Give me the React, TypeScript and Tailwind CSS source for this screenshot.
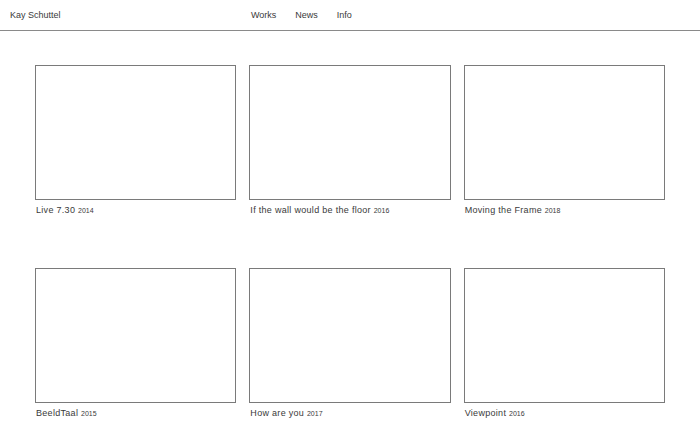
const works = [
  { title: "Live 7.30", year: "2014" },
  { title: "If the wall would be the floor", year: "2016" },
  { title: "Moving the Frame", year: "2018" },
  { title: "BeeldTaal", year: "2015" },
  { title: "How are you", year: "2017" },
  { title: "Viewpoint", year: "2016" },
];

export default function App() {
  return (
    <main className="min-h-screen bg-white text-[#3a3a3a] font-['Liberation_Sans',Arial,sans-serif]">
      <header className="flex h-[31px] items-center border-b border-[#8a8a8a] text-[9px]">
        <div className="w-[250px] pl-[10px] pt-[1px]">Kay Schuttel</div>
        <nav className="flex gap-[19px] pl-[1px] pt-[1px]">
          <a>Works</a>
          <a>News</a>
          <a>Info</a>
        </nav>
      </header>

      <section className="grid grid-cols-3 gap-x-[13px] gap-y-[52px] px-[35px] pt-[34px]">
        {works.map((w) => (
          <div key={w.title}>
            <div className="h-[135px] border border-[#7a7a7a]" />
            <p className="mt-[5px] pl-[1px] text-[9px] leading-[11px] tracking-[0.3px]">
              {w.title} <span className="text-[7px] tracking-normal">{w.year}</span>
            </p>
          </div>
        ))}
      </section>
    </main>
  );
}
